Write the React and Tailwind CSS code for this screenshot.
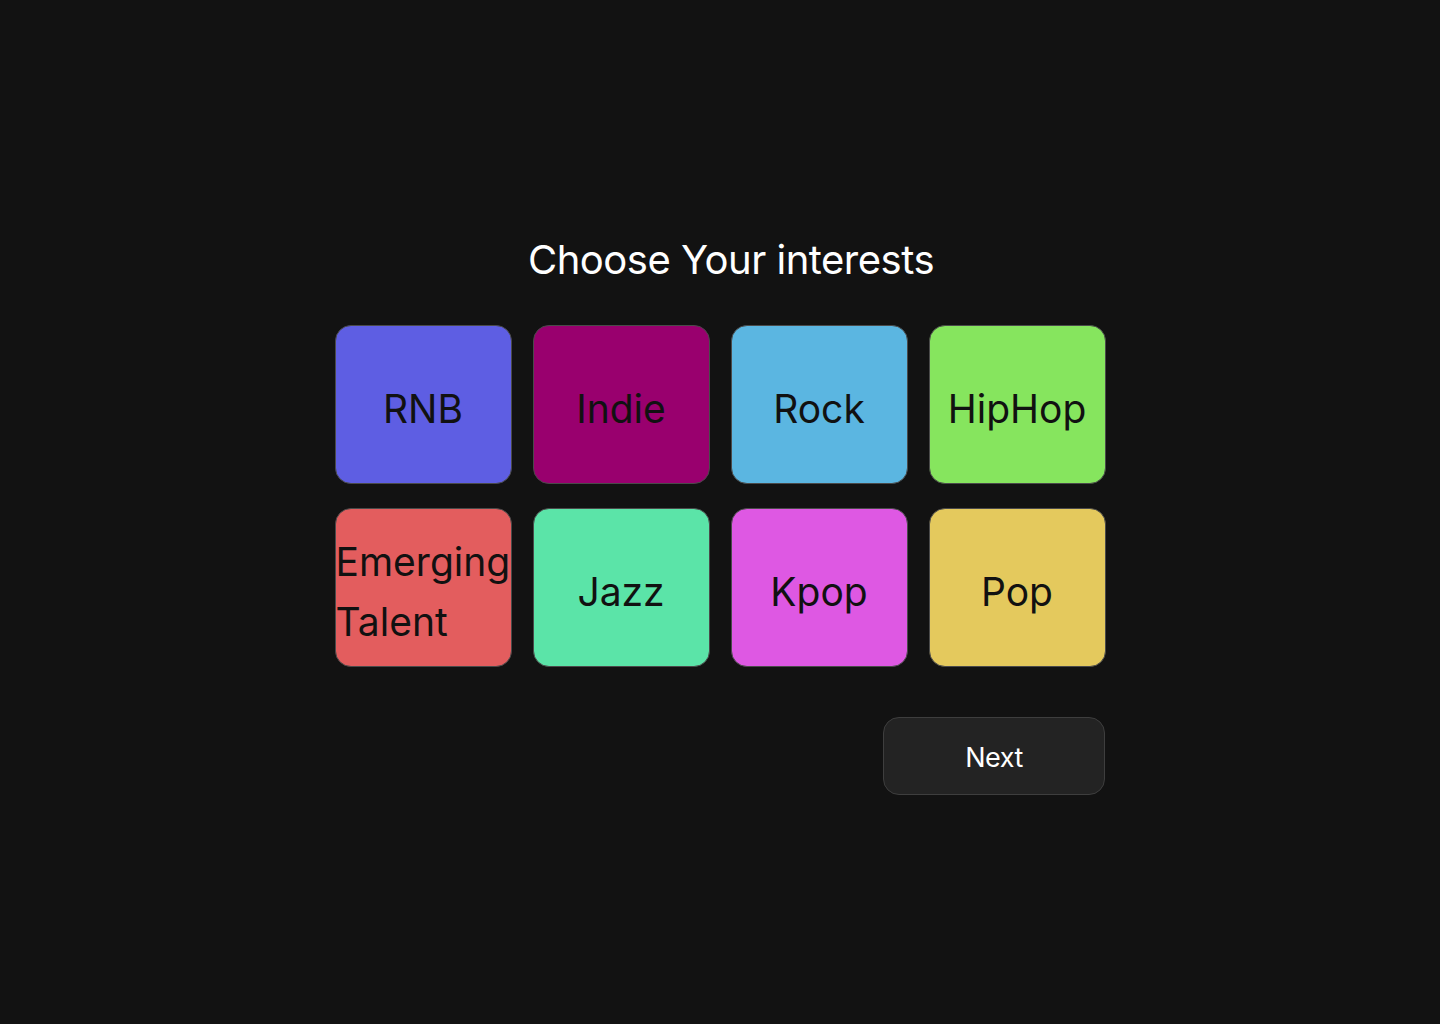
import React, { useState } from "react";

const interests = [
  { name: "RNB", color: "bg-[#5e5ee3]" },
  { name: "Indie", color: "bg-[#99006e]" },
  { name: "Rock", color: "bg-[#5bb6e1]" },
  { name: "HipHop", color: "bg-[#86e55e]" },
  { name: "Emerging Talent", color: "bg-[#e35d5e]" },
  { name: "Jazz", color: "bg-[#5be4a8]" },
  { name: "Kpop", color: "bg-[#de58e3]" },
  { name: "Pop", color: "bg-[#e4c95d]" },
];

const App = () => {
  const [selected, setSelected] = useState([]);

  const toggle = (name) => {
    setSelected((prev) =>
      prev.includes(name) ? prev.filter((n) => n !== name) : [...prev, name]
    );
  };

  return (
    <div className="min-h-screen bg-[#121212] flex flex-col items-center pt-[236px] font-['Inter',sans-serif]">
      <h1 className="text-[40px] leading-[48px] text-white font-normal tracking-[-0.5px] pl-[22px]">
        Choose Your interests
      </h1>
      <div className="grid grid-cols-4 gap-x-[21px] gap-y-[24px] mt-[41px]">
        {interests.map((item) => (
          <button
            key={item.name}
            onClick={() => toggle(item.name)}
            className={`${item.color} w-[177px] h-[159px] rounded-[16px] border border-[#4a4a4a] flex items-center justify-center pt-[8px] text-left text-[39px] leading-[60px] text-[#111111] font-[430]`}
          >
            <span>{item.name}</span>
          </button>
        ))}
      </div>
      <div className="w-[770px] flex justify-end mt-[50px]">
        <button className="w-[222px] h-[78px] rounded-[16px] bg-[#232323] border border-[#3e3e3e] pt-[4px] text-white text-[27px] tracking-[-0.5px]">
          Next
        </button>
      </div>
    </div>
  );
};

export default App;
